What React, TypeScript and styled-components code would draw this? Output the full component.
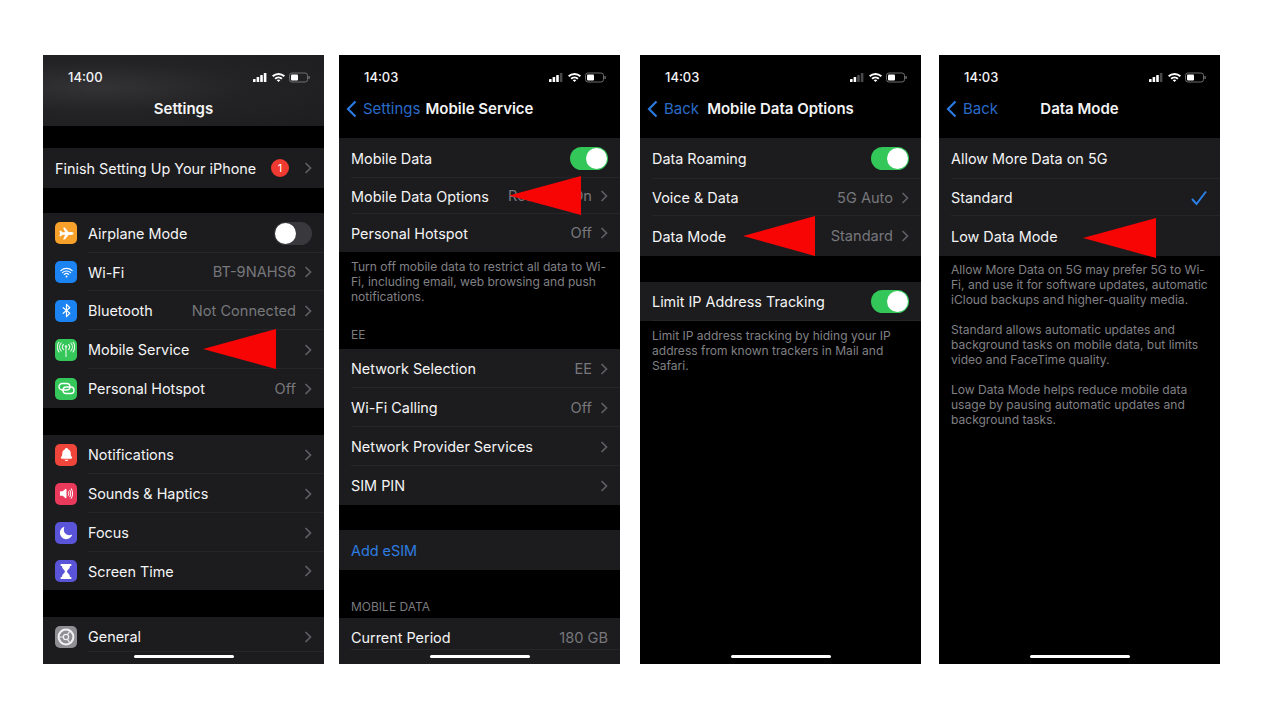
import React from "react";
import styled, { createGlobalStyle } from "styled-components";
import {
  IoAirplane,
  IoWifi,
  IoBluetooth,
  IoNotifications,
  IoVolumeHigh,
  IoMoon,
} from "react-icons/io5";

const GlobalStyle = createGlobalStyle`
  html, body {
    margin: 0;
    padding: 0;
    background: #fff;
  }
  body {
    font-family: Inter, "Liberation Sans", sans-serif;
  }
`;

const Page = styled.div`
  width: 1280px;
  height: 720px;
  box-sizing: border-box;
  padding: 55px 0 0 43px;
  display: flex;
  align-items: flex-start;
  overflow: hidden;
`;

const Phone = styled.div<{ $gap?: number }>`
  position: relative;
  width: 281px;
  height: 609px;
  flex: none;
  margin-right: ${(p) => p.$gap || 0}px;
  background: #000;
  color: #f4f4f6;
  overflow: hidden;
  font-size: 14.4px;
`;

const Header = styled.div<{ $tinted?: boolean }>`
  height: ${(p) => (p.$tinted ? 71 : 83)}px;
  background: ${(p) =>
    p.$tinted
      ? "radial-gradient(ellipse at 20% 45%, #333335 0%, #232325 45%, #1d1d1f 100%)"
      : "#000"};
`;

const StatusBar = styled.div`
  height: 44px;
  padding: 0 14px 0 25px;
  display: flex;
  align-items: center;
  justify-content: space-between;
`;

const Time = styled.span`
  font-size: 13px;
  font-weight: 500;
`;

const StatusIcons = styled.svg`
  display: block;
`;

const NavBar = styled.div`
  height: 16px;
  display: grid;
  grid-template-columns: 1fr auto 1fr;
  align-items: center;
`;

const BackLink = styled.div`
  display: flex;
  align-items: center;
  gap: 6px;
  padding-left: 7px;
  color: #2a6bc9;
  font-size: 15px;
`;

const NavTitle = styled.div`
  font-size: 15px;
  font-weight: 600;
  white-space: nowrap;
`;

const Group = styled.div<{ $top?: number }>`
  margin-top: ${(p) => p.$top || 0}px;
  background: #1c1c1e;
`;

const RowBox = styled.div<{
  $h: number;
  $withIcon?: boolean;
  $last?: boolean;
  $lineLift?: number;
}>`
  position: relative;
  height: ${(p) => p.$h}px;
  padding: 0 12px;
  display: flex;
  align-items: center;
  gap: 11px;
  &::after {
    content: "";
    display: ${(p) => (p.$last ? "none" : "block")};
    position: absolute;
    right: 0;
    bottom: ${(p) => p.$lineLift || 0}px;
    left: ${(p) => (p.$withIcon ? 45 : 12)}px;
    height: 1px;
    background: #262628;
  }
`;

const Tile = styled.div<{ $bg: string }>`
  width: 22px;
  height: 22px;
  flex: none;
  border-radius: 5px;
  background: ${(p) => p.$bg};
  color: #fff;
  display: flex;
  align-items: center;
  justify-content: center;
`;

const Label = styled.span<{ $link?: boolean }>`
  flex: 1;
  white-space: nowrap;
  color: ${(p) => (p.$link ? "#2f7de1" : "inherit")};
`;

const Value = styled.span<{ $plain?: boolean }>`
  color: #77777c;
  font-size: 14.6px;
  white-space: nowrap;
  margin-right: ${(p) => (p.$plain ? 0 : -3)}px;
`;

const Badge = styled.span`
  width: 18px;
  height: 18px;
  margin-right: 4px;
  border-radius: 50%;
  background: #ef3a32;
  color: #fff;
  font-size: 11px;
  display: flex;
  align-items: center;
  justify-content: center;
`;

const ChevronSvg = styled.svg`
  flex: none;
  display: block;
`;

const Switch = styled.div<{ $on?: boolean }>`
  width: 38px;
  height: 23px;
  box-sizing: border-box;
  padding: 1px;
  border-radius: 12px;
  background: ${(p) => (p.$on ? "#33c659" : "#39393d")};
  display: flex;
  justify-content: ${(p) => (p.$on ? "flex-end" : "flex-start")};
  &::before {
    content: "";
    width: 21px;
    height: 21px;
    border-radius: 50%;
    background: #fff;
  }
`;

const Footnote = styled.p<{ $top: number }>`
  margin: ${(p) => p.$top}px 0 0;
  padding: 0 12px;
  color: #808085;
  font-size: 12.05px;
  line-height: 15px;
  white-space: nowrap;
`;

const SectionHeader = styled.div<{ $top: number }>`
  margin-top: ${(p) => p.$top}px;
  padding: 0 12px;
  height: 15px;
  line-height: 15px;
  color: #7a7a7f;
  font-size: 12px;
`;

const HomeBar = styled.div`
  position: absolute;
  left: 91px;
  bottom: 6px;
  width: 100px;
  height: 3px;
  border-radius: 2px;
  background: #fff;
`;

const Arrow = styled.svg<{ $x: number; $y: number }>`
  position: absolute;
  left: ${(p) => p.$x}px;
  top: ${(p) => p.$y}px;
  display: block;
`;

const Chevron = () => (
  <ChevronSvg width="8" height="12" viewBox="0 0 8 12">
    <polyline points="1.5,1 6.5,6 1.5,11" fill="none" stroke="#5f5f63" strokeWidth="1.7" />
  </ChevronSvg>
);

const Status = ({ time, bars }: { time: string; bars: number }) => (
  <StatusBar>
    <Time>{time}</Time>
    <StatusIcons width="58" height="12" viewBox="0 0 58 12">
      {[0, 1, 2, 3].map((i) => (
        <rect
          key={i}
          x={1 + i * 3.6}
          y={8 - i * 2}
          width="2.6"
          height={3 + i * 2}
          rx="0.6"
          fill={i < bars ? "#fff" : "#4a4a4c"}
        />
      ))}
      <path d="M20 4.6a9.4 9.4 0 0 1 13 0l-1.3 1.4a7.5 7.5 0 0 0-10.4 0z" fill="#fff" />
      <path d="M22.4 7a6 6 0 0 1 8.2 0l-1.4 1.4a4 4 0 0 0-5.4 0z" fill="#fff" />
      <path d="M24.7 9.3a2.6 2.6 0 0 1 3.6 0L26.5 11z" fill="#fff" />
      <rect x="37.5" y="2" width="18" height="9" rx="2.4" fill="none" stroke="#77777a" strokeWidth="0.9" />
      <rect x="39" y="3.5" width="7" height="6" rx="1" fill="#fff" />
      <rect x="56.4" y="5" width="1.3" height="3" rx="0.6" fill="#77777a" />
    </StatusIcons>
  </StatusBar>
);

const Nav = ({ back, title }: { back?: string; title: string }) => (
  <NavBar>
    <BackLink>
      {back && (
        <>
          <svg width="11" height="18" viewBox="0 0 11 18">
            <polyline points="9.5,1.5 2,9 9.5,16.5" fill="none" stroke="#2a7ae0" strokeWidth="2.2" />
          </svg>
          {back}
        </>
      )}
    </BackLink>
    <NavTitle>{title}</NavTitle>
  </NavBar>
);

interface RowProps {
  h?: number;
  icon?: React.ReactNode;
  color?: string;
  label: string;
  value?: string;
  chevron?: boolean;
  last?: boolean;
  link?: boolean;
  lineLift?: number;
  children?: React.ReactNode;
}

const Row = ({ h = 39, icon, color, label, value, chevron, last, link, lineLift, children }: RowProps) => (
  <RowBox $h={h} $withIcon={!!icon} $last={last} $lineLift={lineLift}>
    {icon && <Tile $bg={color || "#888"}>{icon}</Tile>}
    <Label $link={link}>{label}</Label>
    {value && <Value $plain={!chevron}>{value}</Value>}
    {children}
    {chevron && <Chevron />}
  </RowBox>
);

const RedArrow = ({ x, y, w, h }: { x: number; y: number; w: number; h: number }) => (
  <Arrow $x={x} $y={y} width={w} height={h} viewBox={`0 0 ${w} ${h}`}>
    <polygon points={`0,${h / 2} ${w},0 ${w},${h}`} fill="#f70505" />
  </Arrow>
);

const Hourglass = () => (
  <svg width="12" height="15" viewBox="0 0 12 15">
    <rect x="0.5" y="0" width="11" height="2" rx="0.8" fill="#fff" />
    <rect x="0.5" y="13" width="11" height="2" rx="0.8" fill="#fff" />
    <path d="M2 2h8c0 3-3 4-3 5.5S10 10 10 13H2c0-3 3-4 3-5.5S2 5 2 2z" fill="#fff" />
  </svg>
);

const Antenna = () => (
  <svg width="18" height="16" viewBox="0 0 18 16" fill="none" stroke="#e8f8ec" strokeWidth="1.1" strokeLinecap="round">
    <line x1="9" y1="6" x2="9" y2="14.5" />
    <circle cx="9" cy="4.5" r="1.2" fill="#e8f8ec" stroke="none" />
    <path d="M6.5 2.5a3.2 3.2 0 0 0 0 5M11.5 2.5a3.2 3.2 0 0 1 0 5" />
    <path d="M4.2 1a6 6 0 0 0 0 8M13.8 1a6 6 0 0 1 0 8" />
    <path d="M2 0a9 9 0 0 0 0 10M16 0a9 9 0 0 1 0 10" />
  </svg>
);

const Hotspot = () => (
  <svg width="17" height="13" viewBox="0 0 17 13" fill="none" stroke="#fff" strokeWidth="1.4">
    <rect x="1" y="1.5" width="11" height="6.5" rx="3.2" />
    <rect x="5" y="5" width="11" height="6.5" rx="3.2" />
  </svg>
);

const Gear = () => (
  <svg width="18" height="18" viewBox="0 0 18 18" fill="none" stroke="#f2f2f2">
    <circle cx="9" cy="9" r="7.4" strokeWidth="2" />
    <circle cx="9" cy="9" r="2.6" strokeWidth="1.2" />
    <path d="M6.5 9H2.5M10.5 6.5l2.2-3.2M10.5 11.5l2.2 3.2" strokeWidth="1.2" />
  </svg>
);

const App: React.FC = () => {
  return (
    <>
      <GlobalStyle />
      <Page>
        <Phone $gap={15}>
          <Header $tinted>
            <Status time="14:00" bars={4} />
            <NavBar>
              <span />
              <NavTitle>Settings</NavTitle>
            </NavBar>
          </Header>
          <Group $top={22}>
            <Row h={40} label="Finish Setting Up Your iPhone" chevron last>
              <Badge>1</Badge>
            </Row>
          </Group>
          <Group $top={25}>
            <Row h={40} icon={<IoAirplane size={15} />} color="#f7a12b" label="Airplane Mode">
              <Switch />
            </Row>
            <Row h={38} icon={<IoWifi size={15} />} color="#1b84f2" label="Wi-Fi" value="BT-9NAHS6" chevron />
            <Row icon={<IoBluetooth size={15} />} color="#1b84f2" label="Bluetooth" value="Not Connected" chevron />
            <Row icon={<Antenna />} color="#35c759" label="Mobile Service" chevron />
            <Row icon={<Hotspot />} color="#35c759" label="Personal Hotspot" value="Off" chevron last />
          </Group>
          <Group $top={27}>
            <Row icon={<IoNotifications size={15} />} color="#ef453a" label="Notifications" chevron />
            <Row icon={<IoVolumeHigh size={15} />} color="#ea3a5b" label="Sounds &amp; Haptics" chevron />
            <Row icon={<IoMoon size={14} />} color="#5a55d8" label="Focus" chevron />
            <Row h={38} icon={<Hourglass />} color="#5a55d8" label="Screen Time" chevron last />
          </Group>
          <Group $top={27}>
            <Row lineLift={4} icon={<Gear />} color="#8e8e93" label="General" chevron />
            <Row h={11} label="" last />
          </Group>
          <HomeBar />
          <RedArrow x={160} y={274} w={73} h={40} />
        </Phone>

        <Phone $gap={20}>
          <Header>
            <Status time="14:03" bars={3} />
            <Nav back="Settings" title="Mobile Service" />
          </Header>
          <Group>
            <Row h={40} label="Mobile Data">
              <Switch $on />
            </Row>
            <Row h={36} label="Mobile Data Options" value="Roaming On" chevron />
            <Row h={38} label="Personal Hotspot" value="Off" chevron last />
          </Group>
          <Footnote $top={7}>
            Turn off mobile data to restrict all data to Wi-
            <br />
            Fi, including email, web browsing and push
            <br />
            notifications.
          </Footnote>
          <SectionHeader $top={23}>EE</SectionHeader>
          <Group $top={7}>
            <Row label="Network Selection" value="EE" chevron />
            <Row label="Wi-Fi Calling" value="Off" chevron />
            <Row label="Network Provider Services" chevron />
            <Row label="SIM PIN" chevron last />
          </Group>
          <Group $top={25}>
            <Row h={40} label="Add eSIM" link last />
          </Group>
          <SectionHeader $top={29}>MOBILE DATA</SectionHeader>
          <Group $top={4}>
            <Row lineLift={7} label="Current Period" value="180 GB" />
            <Row h={10} label="" last />
          </Group>
          <HomeBar />
          <RedArrow x={170} y={121} w={72} h={39} />
        </Phone>

        <Phone $gap={18}>
          <Header>
            <Status time="14:03" bars={2} />
            <Nav back="Back" title="Mobile Data Options" />
          </Header>
          <Group>
            <Row h={41} label="Data Roaming">
              <Switch $on />
            </Row>
            <Row h={37} label="Voice &amp; Data" value="5G Auto" chevron />
            <Row h={40} label="Data Mode" value="Standard" chevron last />
          </Group>
          <Group $top={26}>
            <Row label="Limit IP Address Tracking">
              <Switch $on />
            </Row>
          </Group>
          <Footnote $top={7}>
            Limit IP address tracking by hiding your IP
            <br />
            address from known trackers in Mail and
            <br />
            Safari.
          </Footnote>
          <HomeBar />
          <RedArrow x={103} y={161} w={72} h={40} />
        </Phone>

        <Phone>
          <Header>
            <Status time="14:03" bars={3} />
            <Nav back="Back" title="Data Mode" />
          </Header>
          <Group>
            <Row h={41} label="Allow More Data on 5G" />
            <Row h={37} label="Standard">
              <svg width="18" height="16" viewBox="0 0 18 16">
                <polyline points="2,9 6.5,14 16,1.5" fill="none" stroke="#2a80e6" strokeWidth="2" />
              </svg>
            </Row>
            <Row h={40} label="Low Data Mode" last />
          </Group>
          <Footnote $top={6}>
            Allow More Data on 5G may prefer 5G to Wi-
            <br />
            Fi, and use it for software updates, automatic
            <br />
            iCloud backups and higher-quality media.
          </Footnote>
          <Footnote $top={15}>
            Standard allows automatic updates and
            <br />
            background tasks on mobile data, but limits
            <br />
            video and FaceTime quality.
          </Footnote>
          <Footnote $top={15}>
            Low Data Mode helps reduce mobile data
            <br />
            usage by pausing automatic updates and
            <br />
            background tasks.
          </Footnote>
          <HomeBar />
          <RedArrow x={144} y={163} w={73} h={40} />
        </Phone>
      </Page>
    </>
  );
};

export default App;
